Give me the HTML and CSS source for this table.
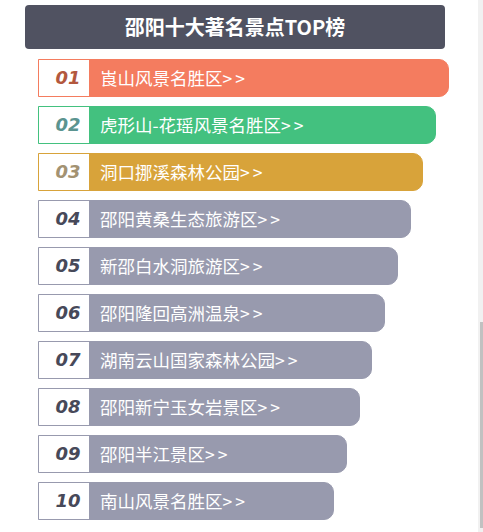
FILE: index.html
```html
<!DOCTYPE html>
<html lang="zh-CN">
<head>
<meta charset="utf-8">
<title>邵阳十大著名景点TOP榜</title>
<link rel="stylesheet" href="styles.css">
</head>
<body>
<div class="board">
  <h1 class="board-title">邵阳十大著名景点TOP榜</h1>
  <ul class="rank-list">
    <li class="rank rank-1" style="width:411px"><span class="rank-no">01</span><a class="rank-name">崀山风景名胜区<span class="arrows">&gt;&gt;</span></a></li>
    <li class="rank rank-2" style="width:398px"><span class="rank-no">02</span><a class="rank-name">虎形山-花瑶风景名胜区<span class="arrows">&gt;&gt;</span></a></li>
    <li class="rank rank-3" style="width:385px"><span class="rank-no">03</span><a class="rank-name">洞口挪溪森林公园<span class="arrows">&gt;&gt;</span></a></li>
    <li class="rank" style="width:373px"><span class="rank-no">04</span><a class="rank-name">邵阳黄桑生态旅游区<span class="arrows">&gt;&gt;</span></a></li>
    <li class="rank" style="width:360px"><span class="rank-no">05</span><a class="rank-name">新邵白水洞旅游区<span class="arrows">&gt;&gt;</span></a></li>
    <li class="rank" style="width:347px"><span class="rank-no">06</span><a class="rank-name">邵阳隆回高洲温泉<span class="arrows">&gt;&gt;</span></a></li>
    <li class="rank" style="width:334px"><span class="rank-no">07</span><a class="rank-name">湖南云山国家森林公园<span class="arrows">&gt;&gt;</span></a></li>
    <li class="rank" style="width:322px"><span class="rank-no">08</span><a class="rank-name">邵阳新宁玉女岩景区<span class="arrows">&gt;&gt;</span></a></li>
    <li class="rank" style="width:309px"><span class="rank-no">09</span><a class="rank-name">邵阳半江景区<span class="arrows">&gt;&gt;</span></a></li>
    <li class="rank" style="width:296px"><span class="rank-no">10</span><a class="rank-name">南山风景名胜区<span class="arrows">&gt;&gt;</span></a></li>
  </ul>
</div>
<div class="scroll-track"><div class="scroll-thumb"></div></div>
</body>
</html>
```
FILE: styles.css
```css
html, body {
  margin: 0;
  padding: 0;
  background: #ffffff;
  overflow: hidden;
}
body {
  font-family: "Noto Sans CJK SC", "Noto Sans", sans-serif;
}
.board {
  width: 420px;
  margin: 5px 0 0 25px;
}
.board-title {
  margin: 0;
  height: 44px;
  line-height: 44px;
  background: #505261;
  border-radius: 4px;
  color: #ffffff;
  font-size: 20px;
  font-weight: bold;
  text-align: center;
}
.rank-list {
  list-style: none;
  margin: 10px 0 0 13px;
  padding: 0;
  display: flex;
  flex-direction: column;
  gap: 9px;
}
.rank {
  --c: #989aae;
  --n: #474959;
  box-sizing: border-box;
  height: 38px;
  display: flex;
  border: 1px solid var(--c);
  border-radius: 0 10px 10px 0;
  background: var(--c);
}
.rank-1 { --c: #f47c5f; --n: #b3583e; }
.rank-2 { --c: #43c17f; --n: #5b9490; }
.rank-3 { --c: #d8a33a; --n: #a39272; }
.rank-no {
  width: 50px;
  flex: none;
  box-sizing: border-box;
  padding-left: 8px;
  background: #ffffff;
  color: var(--n);
  font-family: "DejaVu Sans", "Liberation Sans", sans-serif;
  font-weight: bold;
  font-style: italic;
  font-size: 18px;
  line-height: 36px;
  text-align: center;
}
.rank-name {
  flex: 1;
  padding-left: 11px;
  color: #ffffff;
  font-size: 17.5px;
  line-height: 36px;
  white-space: nowrap;
  overflow: hidden;
}
.arrows {
  letter-spacing: 3px;
}
.scroll-track {
  position: fixed;
  top: 0;
  right: 0;
  width: 5px;
  height: 100%;
  background: #f1f1f1;
}
.scroll-thumb {
  position: absolute;
  right: 0;
  top: 322px;
  width: 3px;
  height: 206px;
  background: #c1c1c1;
}
```
